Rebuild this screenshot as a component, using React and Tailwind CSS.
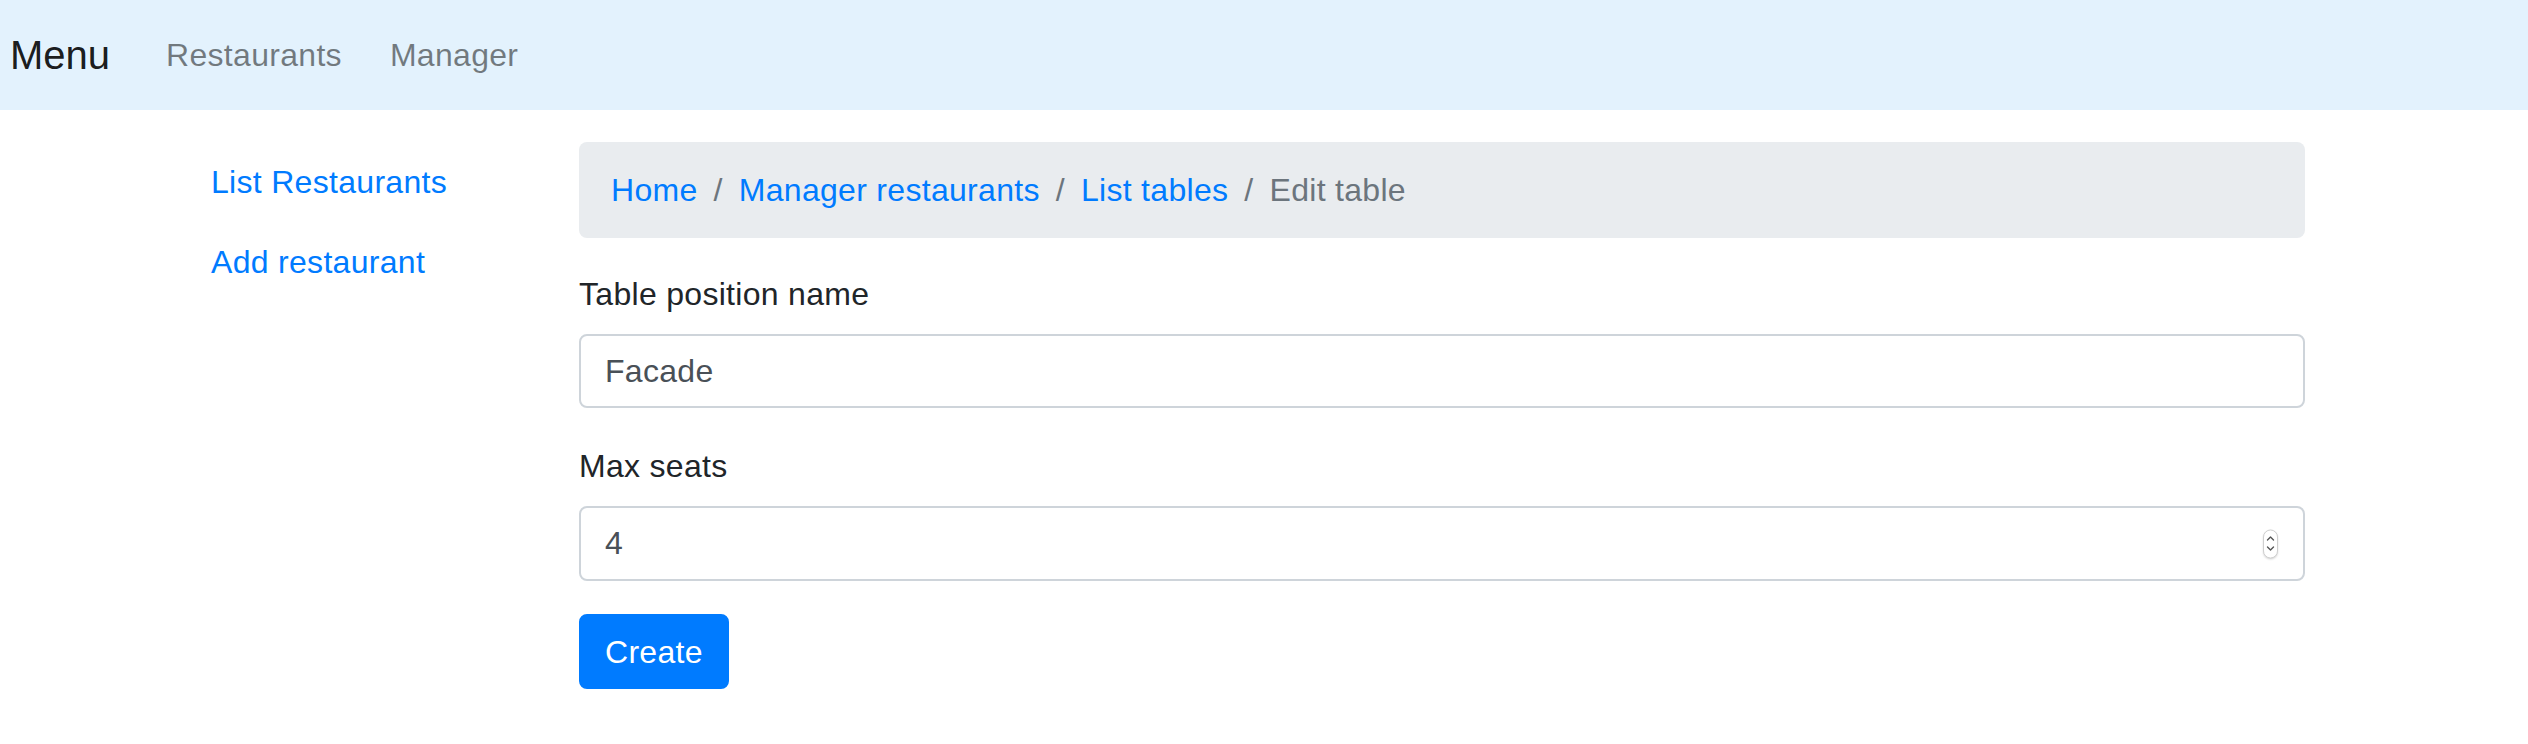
import React from "react";

function Spinner() {
  return (
    <div className="absolute right-[27px] top-1/2 -translate-y-1/2 w-[15px] h-[29px] rounded-full border border-[#cfcfcf] bg-white shadow-[0_1px_2px_rgba(0,0,0,0.15)] flex items-center justify-center">
      <svg width="9" height="20" viewBox="0 0 9 20" fill="none">
        <path d="M1.5 6.5 L4.5 3.5 L7.5 6.5" stroke="#555" strokeWidth="1.4" strokeLinecap="round" strokeLinejoin="round" />
        <path d="M1.5 13.5 L4.5 16.5 L7.5 13.5" stroke="#555" strokeWidth="1.4" strokeLinecap="round" strokeLinejoin="round" />
      </svg>
    </div>
  );
}

export default function App() {
  const crumbs = ["Home", "Manager restaurants", "List tables"];
  return (
    <div className="min-h-screen bg-white font-['Liberation_Sans',Arial,sans-serif] text-[32px] leading-[48px] tracking-[0.3px] text-[#212529]">
      <nav className="h-[110px] bg-[#e3f2fd] flex items-center pl-[10px]">
        <a href="#" className="text-[40px] leading-[60px] tracking-normal text-black/90 mr-[32px]">Menu</a>
        <a href="#" className="px-[24px] text-black/50">Restaurants</a>
        <a href="#" className="px-[24px] text-black/50">Manager</a>
      </nav>

      <div className="flex pt-8 pl-[179px]">
        <div className="w-[400px] shrink-0 flex flex-col">
          <a href="#" className="px-8 py-4 text-[#007bff]">List Restaurants</a>
          <a href="#" className="px-8 py-4 text-[#007bff]">Add restaurant</a>
        </div>

        <div className="w-[1726px] shrink-0">
          <ol className="flex items-center bg-[#e9ecef] rounded-lg px-8 py-6 mb-8">
            {crumbs.map((c) => (
              <li key={c} className="flex">
                <a href="#" className="text-[#007bff]">{c}</a>
                <span className="px-4 text-[#6c757d]">/</span>
              </li>
            ))}
            <li className="text-[#6c757d]">Edit table</li>
          </ol>

          <form>
            <div className="mb-[34px]">
              <label className="block mb-4">Table position name</label>
              <input
                type="text"
                defaultValue="Facade"
                className="block w-full h-[74px] border-2 border-[#ced4da] rounded-lg px-6 text-[32px] tracking-[0.3px] text-[#495057] bg-white outline-none"
              />
            </div>
            <div className="mb-[33px]">
              <label className="block mb-4">Max seats</label>
              <div className="relative">
                <input
                  type="text"
                  defaultValue="4"
                  className="block w-full h-[75px] border-2 border-[#ced4da] rounded-lg px-6 text-[32px] tracking-[0.3px] text-[#495057] bg-white outline-none"
                />
                <Spinner />
              </div>
            </div>
            <button
              type="button"
              className="h-[75px] px-6 border-2 border-[#007bff] bg-[#007bff] text-white rounded-lg text-[32px] leading-[48px] tracking-[0.3px]"
            >
              Create
            </button>
          </form>
        </div>
      </div>
    </div>
  );
}
